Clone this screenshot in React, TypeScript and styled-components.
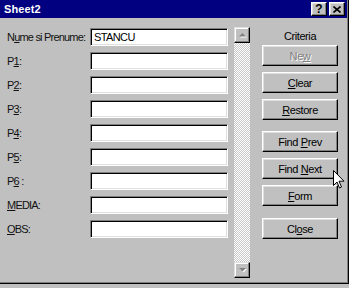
import React from 'react'
import styled, { createGlobalStyle } from 'styled-components'

const GlobalStyle = createGlobalStyle`
  html, body {
    margin: 0;
    padding: 0;
    background: #c0c0c0;
  }
  body {
    font-family: "Liberation Sans", Arial, sans-serif;
    font-size: 11px;
    color: #000;
  }
`

const Window = styled.div`
  position: relative;
  width: 349px;
  height: 284px;
  box-sizing: border-box;
  background: #c0c0c0;
  border-right: 1px solid #000;
  border-bottom: 1px solid #000;
  box-shadow: inset -1px -1px #808080;
  display: flex;
  flex-direction: column;
`

// title bar
const TitleBar = styled.div`
  height: 18px;
  margin-right: 1px;
  background: #000080;
  display: flex;
  align-items: center;
  justify-content: space-between;
  padding: 0 2px 0 4px;
`

const Title = styled.span`
  color: #fff;
  font-weight: bold;
  font-size: 11px;
  letter-spacing: 0.1px;
`

const CaptionButtons = styled.div`
  display: flex;
  gap: 2px;
`

const CapButton = styled.div`
  width: 16px;
  height: 14px;
  box-sizing: border-box;
  background: #c0c0c0;
  border: 1px solid;
  border-color: #fff #000 #000 #fff;
  box-shadow: inset -1px -1px #808080, inset 1px 1px #dfdfdf;
  display: flex;
  align-items: center;
  justify-content: center;
  font-weight: bold;
  font-size: 12px;
  line-height: 1;
`

// body
const Body = styled.div`
  display: flex;
  padding-top: 9px;
`

const Fields = styled.div`
  display: grid;
  grid-template-columns: 83px 138px;
  grid-auto-rows: 18px;
  row-gap: 6px;
  padding: 1px 0 0 7px;
`

const Label = styled.label`
  align-self: center;
  letter-spacing: -0.8px;
  white-space: nowrap;
  color: #111;
`

const Field = styled.div`
  box-sizing: border-box;
  background: #fff;
  border: 1px solid;
  border-color: #808080 #fff #fff #808080;
  box-shadow: inset 1px 1px #000, inset -1px -1px #dfdfdf;
  padding: 0 3px;
  line-height: 16px;
  letter-spacing: -0.6px;
`

const ScrollBar = styled.div`
  margin-left: 6px;
  width: 16px;
  height: 251px;
  display: flex;
  flex-direction: column;
  background: repeating-conic-gradient(#fff 0 25%, #c8c8c8 0 50%) 0 0 / 2px 2px;
`

const ScrollButton = styled.div`
  height: 16px;
  box-sizing: border-box;
  background: #c0c0c0;
  border: 1px solid;
  border-color: #dfdfdf #000 #000 #dfdfdf;
  box-shadow: inset -1px -1px #808080, inset 1px 1px #fff;
  display: flex;
  align-items: center;
  justify-content: center;
`

const Track = styled.div`
  flex: 1;
`

const Side = styled.div`
  margin-left: 12px;
  width: 76px;
  display: flex;
  flex-direction: column;
`

const Criteria = styled.div`
  height: 18px;
  line-height: 18px;
  text-align: center;
  letter-spacing: -0.4px;
`

const Button = styled.div<{ $gapTop?: number; $disabled?: boolean }>`
  height: 21px;
  margin-top: ${(p) => p.$gapTop ?? 6}px;
  box-sizing: border-box;
  border: 1px solid;
  border-color: #fff #000 #000 #fff;
  box-shadow: inset -1px -1px #808080, inset 1px 1px #dfdfdf;
  display: flex;
  align-items: center;
  justify-content: center;
  letter-spacing: -0.4px;
  color: ${(p) => (p.$disabled ? '#808080' : '#000')};
  text-shadow: ${(p) => (p.$disabled ? '1px 1px #fff' : 'none')};
`

const Cursor = styled.svg`
  position: absolute;
  left: 333px;
  top: 170px;
`

function Arrow({ down }: { down?: boolean }) {
  return (
    <svg width="9" height="6" viewBox="0 0 9 6">
      <polygon
        points={down ? '1,1 8,1 4.5,4.5' : '1,4.5 8,4.5 4.5,1'}
        fill="#fff"
        transform="translate(1,1)"
      />
      <polygon points={down ? '1,1 8,1 4.5,4.5' : '1,4.5 8,4.5 4.5,1'} fill="#808080" />
    </svg>
  )
}

const rows: [React.ReactNode, string][] = [
  [<>N<u>u</u>me si Prenume:</>, 'STANCU'],
  [<>P<u>1</u>:</>, ''],
  [<>P<u>2</u>:</>, ''],
  [<>P<u>3</u>:</>, ''],
  [<>P<u>4</u>:</>, ''],
  [<>P<u>5</u>:</>, ''],
  [<>P<u>6</u> :</>, ''],
  [<><u>M</u>EDIA:</>, ''],
  [<><u>O</u>BS:</>, ''],
]

export default function App() {
  return (
    <>
      <GlobalStyle />
      <Window>
        <TitleBar>
          <Title>Sheet2</Title>
          <CaptionButtons>
            <CapButton>?</CapButton>
            <CapButton>
              <svg width="8" height="7" viewBox="0 0 8 7">
                <path d="M0.5 0.5 L7.5 6.5 M7.5 0.5 L0.5 6.5" stroke="#000" strokeWidth="1.6" />
              </svg>
            </CapButton>
          </CaptionButtons>
        </TitleBar>

        <Body>
          <Fields>
            {rows.map(([label, value], i) => (
              <React.Fragment key={i}>
                <Label>{label}</Label>
                <Field>{value}</Field>
              </React.Fragment>
            ))}
          </Fields>

          <ScrollBar>
            <ScrollButton>
              <Arrow />
            </ScrollButton>
            <Track />
            <ScrollButton>
              <Arrow down />
            </ScrollButton>
          </ScrollBar>

          <Side>
            <Criteria>Criteria</Criteria>
            <Button $gapTop={0} $disabled>
              Ne<u>w</u>
            </Button>
            <Button>
              <u>C</u>lear
            </Button>
            <Button>
              <u>R</u>estore
            </Button>
            <Button $gapTop={11}>
              Find&nbsp;<u>P</u>rev
            </Button>
            <Button>
              Find&nbsp;<u>N</u>ext
            </Button>
            <Button>
              <u>F</u>orm
            </Button>
            <Button $gapTop={12}>
              Cl<u>o</u>se
            </Button>
          </Side>
        </Body>

        <Cursor width="12" height="19" viewBox="0 0 12 19">
          <path d="M0.5 0.5 L0.5 15.5 L4 12 L6.5 18 L8.5 17 L6 11.2 L11 11.2 Z" fill="#fff" stroke="#000" strokeWidth="1" />
        </Cursor>
      </Window>
    </>
  )
}
